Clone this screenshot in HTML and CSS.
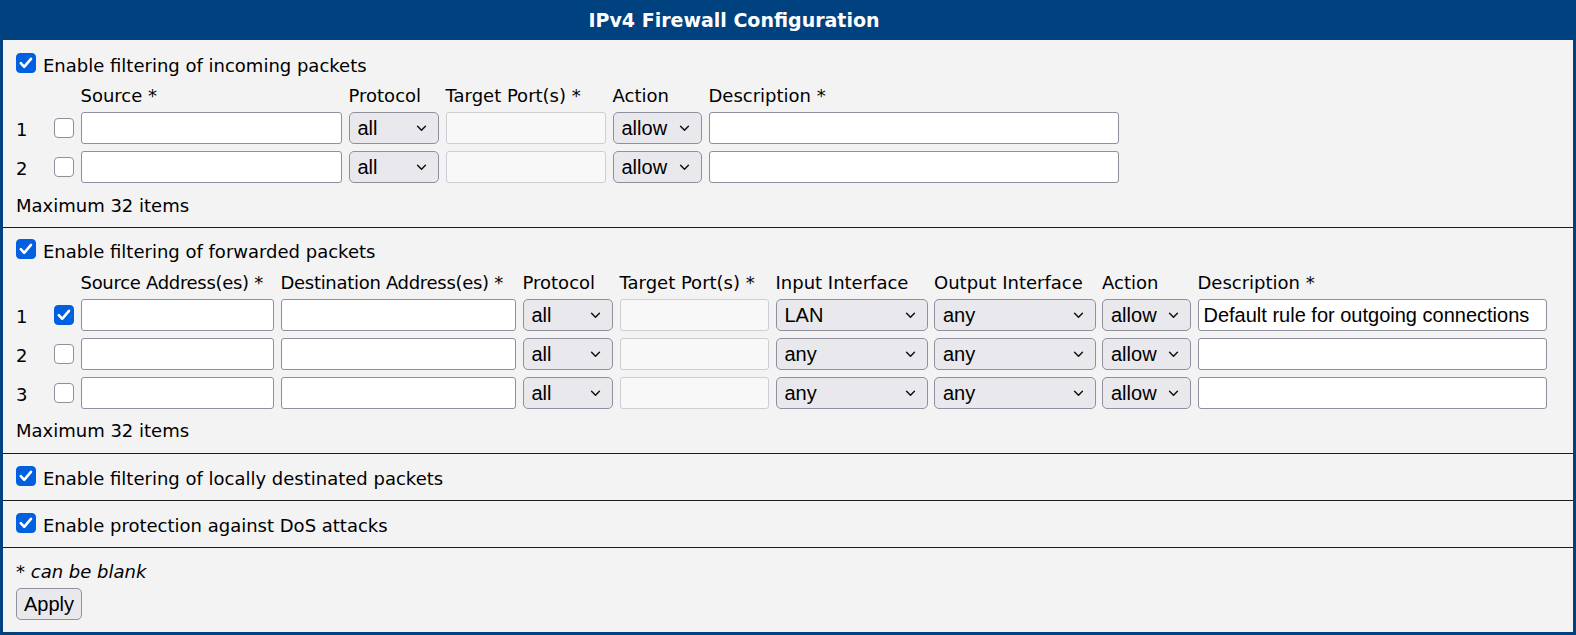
FILE: index.html
```html
<!DOCTYPE html>
<html lang="en">
<head>
<meta charset="utf-8">
<title>IPv4 Firewall Configuration</title>
<link rel="stylesheet" href="styles.css">
</head>
<body>
<div class="panel">
  <div class="titlebar">IPv4 Firewall Configuration</div>

  <section class="sec sec-in">
    <label class="opt"><input type="checkbox" class="cb" checked><span>Enable filtering of incoming packets</span></label>
    <div class="rules">
      <div class="row g1 thead">
        <span></span><span></span>
        <span class="hd">Source *</span>
        <span class="hd">Protocol</span>
        <span class="hd">Target Port(s) *</span>
        <span class="hd">Action</span>
        <span class="hd">Description *</span>
      </div>
      <div class="row g1">
        <span class="num">1</span><input type="checkbox" class="cb">
        <input type="text" class="txt">
        <select class="sel"><option>all</option></select>
        <input type="text" class="txt" disabled>
        <select class="sel"><option>allow</option></select>
        <input type="text" class="txt">
      </div>
      <div class="row g1">
        <span class="num">2</span><input type="checkbox" class="cb">
        <input type="text" class="txt">
        <select class="sel"><option>all</option></select>
        <input type="text" class="txt" disabled>
        <select class="sel"><option>allow</option></select>
        <input type="text" class="txt">
      </div>
    </div>
    <div class="note note-in">Maximum 32 items</div>
  </section>

  <section class="sec sec-fwd">
    <label class="opt"><input type="checkbox" class="cb" checked><span>Enable filtering of forwarded packets</span></label>
    <div class="rules rules-fwd">
      <div class="row g2 thead">
        <span></span><span></span>
        <span class="hd hd-addr">Source Address(es) *</span>
        <span class="hd hd-addr">Destination Address(es) *</span>
        <span class="hd">Protocol</span>
        <span class="hd">Target Port(s) *</span>
        <span class="hd">Input Interface</span>
        <span class="hd">Output Interface</span>
        <span class="hd">Action</span>
        <span class="hd">Description *</span>
      </div>
      <div class="row g2">
        <span class="num">1</span><input type="checkbox" class="cb" checked>
        <input type="text" class="txt">
        <input type="text" class="txt">
        <select class="sel"><option>all</option></select>
        <input type="text" class="txt" disabled>
        <select class="sel"><option>LAN</option></select>
        <select class="sel"><option>any</option></select>
        <select class="sel"><option>allow</option></select>
        <input type="text" class="txt" value="Default rule for outgoing connections">
      </div>
      <div class="row g2">
        <span class="num">2</span><input type="checkbox" class="cb">
        <input type="text" class="txt">
        <input type="text" class="txt">
        <select class="sel"><option>all</option></select>
        <input type="text" class="txt" disabled>
        <select class="sel"><option>any</option></select>
        <select class="sel"><option>any</option></select>
        <select class="sel"><option>allow</option></select>
        <input type="text" class="txt">
      </div>
      <div class="row g2">
        <span class="num">3</span><input type="checkbox" class="cb">
        <input type="text" class="txt">
        <input type="text" class="txt">
        <select class="sel"><option>all</option></select>
        <input type="text" class="txt" disabled>
        <select class="sel"><option>any</option></select>
        <select class="sel"><option>any</option></select>
        <select class="sel"><option>allow</option></select>
        <input type="text" class="txt">
      </div>
    </div>
    <div class="note note-fwd">Maximum 32 items</div>
  </section>

  <section class="sec sec-simple">
    <label class="opt"><input type="checkbox" class="cb" checked><span>Enable filtering of locally destinated packets</span></label>
  </section>

  <section class="sec sec-simple">
    <label class="opt"><input type="checkbox" class="cb" checked><span>Enable protection against DoS attacks</span></label>
  </section>

  <section class="sec sec-foot">
    <div class="note">* <em>can be blank</em></div>
    <button type="button" class="btn">Apply</button>
  </section>
</div>
</body>
</html>
```

FILE: styles.css
```css
* { box-sizing: border-box; }

html, body {
  margin: 0;
  padding: 0;
  background: #f3f3f3;
}

body {
  font-family: "DejaVu Sans", Verdana, sans-serif;
  font-size: 18px;
  color: #000;
}

.panel {
  width: 1576px;
  height: 635px;
  border: 3px solid #00417f;
  border-top: 0;
  background: #f3f3f3;
}

.titlebar {
  height: 40px;
  line-height: 40px;
  margin: 0 -3px;
  background: #00417f;
  color: #fff;
  font-weight: bold;
  font-size: 19px;
  text-align: center;
  padding-right: 108px;
}

.sec {
  padding: 11px 13px 11px 13px;
  border-bottom: 1px solid #1c1c1c;
}

.sec-in { padding-top: 12px; padding-bottom: 10px; }
.sec-fwd { padding-top: 10px; padding-bottom: 11px; }
.sec-foot { border-bottom: 0; padding-bottom: 12px; }

.opt {
  display: flex;
  align-items: center;
  gap: 7px;
  height: 24px;
}
.opt > span {
  line-height: 24px;
  padding-top: 3px;
}
.opt > .cb { margin-top: -2px; }

.rules {
  display: flex;
  flex-direction: column;
  gap: 7px;
  margin-top: 7px;
}
.rules-fwd { margin-top: 8px; }

.row {
  display: grid;
  column-gap: 6.5px;
  align-items: center;
}
.thead {
  height: 24px;
  margin-bottom: -2px;
  align-items: start;
}

.g1 { grid-template-columns: 31.5px 20px 261.5px 90.5px 160.5px 89.5px 410.5px; }
.g2 { grid-template-columns: 31.5px 20px 193.5px 235.5px 90.5px 149.5px 152px 161.5px 89px 349px; }

.hd {
  white-space: nowrap;
  height: 24px;
  line-height: 26px;
}
.hd-addr { letter-spacing: -0.3px; }

.num {
  line-height: 24px;
  padding-top: 3px;
}

.note {
  height: 24px;
  line-height: 26px;
}
.note-in { margin-top: 10px; }
.note-fwd { margin-top: 9px; }

.cb {
  -webkit-appearance: none;
  appearance: none;
  width: 20px;
  height: 20px;
  margin: 0;
  border: 1px solid #8f8f9d;
  border-radius: 4px;
  background: #fff;
  flex: none;
}
.cb:checked {
  background-color: #0060df;
  border-color: #0060df;
  background-image: url("data:image/svg+xml,%3Csvg xmlns='http://www.w3.org/2000/svg' viewBox='0 0 20 20'%3E%3Cpath d='M4.8 10.2 L8.2 13.8 L15 5.8' fill='none' stroke='%23fff' stroke-width='2.6' stroke-linecap='round' stroke-linejoin='round'/%3E%3C/svg%3E");
  background-size: 20px 20px;
  background-position: center;
}

.txt, .sel, .btn {
  font-family: "Liberation Sans", Arial, sans-serif;
  font-size: 20px;
  color: #000;
  margin: 0;
}

.txt {
  width: 100%;
  height: 32px;
  padding: 0 5px;
  border: 1px solid #8f8f9d;
  border-radius: 3px;
  background: #fff;
  outline: none;
}
.txt:disabled {
  background: #f8f8f8;
  border-color: #cdcdd3;
}

.sel {
  -webkit-appearance: none;
  appearance: none;
  width: 100%;
  height: 32px;
  padding: 0 24px 0 8px;
  border: 1px solid #8f8f9d;
  border-radius: 5px;
  background-color: #e9e9ed;
  background-image: url("data:image/svg+xml,%3Csvg xmlns='http://www.w3.org/2000/svg' viewBox='0 0 12 8'%3E%3Cpath d='M1.5 1.5 L6 6 L10.5 1.5' fill='none' stroke='%23111' stroke-width='1.7' stroke-linecap='round' stroke-linejoin='round'/%3E%3C/svg%3E");
  background-repeat: no-repeat;
  background-size: 11px 7px;
  background-position: right 11px center;
}

.btn {
  display: block;
  margin-top: 5px;
  width: 66px;
  height: 32px;
  padding: 0;
  border: 1px solid #8f8f9d;
  border-radius: 5px;
  background: #e9e9ed;
}
```
